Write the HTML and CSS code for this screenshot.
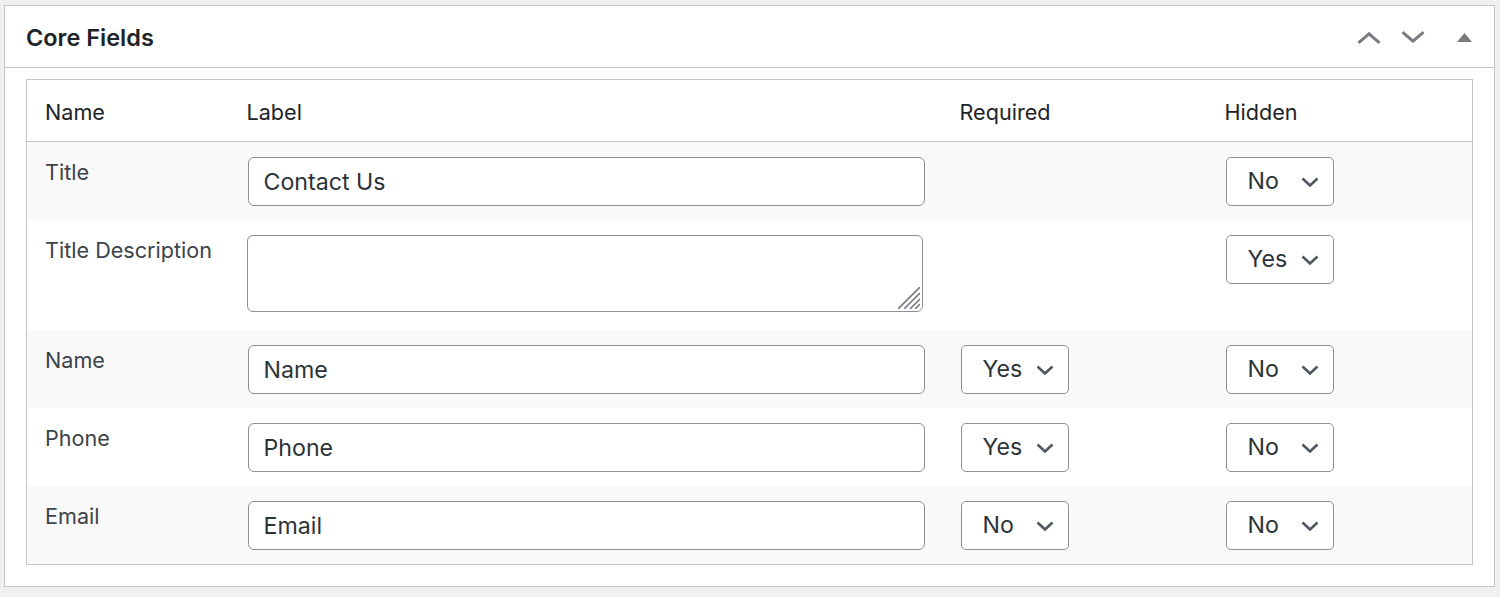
FILE: index.html
```html
<!DOCTYPE html>
<html lang="en">
<head>
<meta charset="utf-8">
<title>Core Fields</title>
<link rel="stylesheet" href="styles.css">
</head>
<body>
<div class="postbox">
  <div class="postbox-header">
    <h2 class="hndle">Core Fields</h2>
    <div class="handle-actions">
      <button class="handle-btn btn-up" type="button" aria-label="Move up">
        <svg width="24" height="12" viewBox="0 0 24 12"><path d="M1.5 10.8 L12 1.8 L22.5 10.8" fill="none" stroke="#787c82" stroke-width="3"/></svg>
      </button>
      <button class="handle-btn btn-down" type="button" aria-label="Move down">
        <svg width="24" height="12" viewBox="0 0 24 12"><path d="M1.5 1.2 L12 10.2 L22.5 1.2" fill="none" stroke="#787c82" stroke-width="3"/></svg>
      </button>
      <button class="handle-btn btn-toggle" type="button" aria-label="Toggle panel">
        <svg width="15" height="9" viewBox="0 0 15 9"><polygon points="7.5,0 15,9 0,9" fill="#787c82"/></svg>
      </button>
    </div>
  </div>
  <div class="inside">
    <table class="fields">
      <colgroup>
        <col class="col-name">
        <col class="col-label">
        <col class="col-req">
        <col class="col-hid">
      </colgroup>
      <thead>
        <tr><th>Name</th><th>Label</th><th>Required</th><th>Hidden</th></tr>
      </thead>
      <tbody>
        <tr class="alt">
          <td class="fname">Title</td>
          <td><input class="text" type="text" value="Contact Us"></td>
          <td></td>
          <td><div class="select">No<svg width="18" height="10" viewBox="0 0 18 10"><path d="M1.5 1.5 L9 8.5 L16.5 1.5" fill="none" stroke="#50575e" stroke-width="2.6"/></svg></div></td>
        </tr>
        <tr class="tall">
          <td class="fname">Title Description</td>
          <td><div class="area"><textarea class="textarea"></textarea><svg class="grip" width="22" height="22" viewBox="0 0 22 22"><path d="M0 22 L22 0 M6 22 L22 6 M12 22 L22 12 M17 22 L22 17" stroke="#787c82" stroke-width="1.6"/></svg></div></td>
          <td></td>
          <td><div class="select">Yes<svg width="18" height="10" viewBox="0 0 18 10"><path d="M1.5 1.5 L9 8.5 L16.5 1.5" fill="none" stroke="#50575e" stroke-width="2.6"/></svg></div></td>
        </tr>
        <tr class="alt">
          <td class="fname">Name</td>
          <td><input class="text" type="text" value="Name"></td>
          <td><div class="select">Yes<svg width="18" height="10" viewBox="0 0 18 10"><path d="M1.5 1.5 L9 8.5 L16.5 1.5" fill="none" stroke="#50575e" stroke-width="2.6"/></svg></div></td>
          <td><div class="select">No<svg width="18" height="10" viewBox="0 0 18 10"><path d="M1.5 1.5 L9 8.5 L16.5 1.5" fill="none" stroke="#50575e" stroke-width="2.6"/></svg></div></td>
        </tr>
        <tr>
          <td class="fname">Phone</td>
          <td><input class="text" type="text" value="Phone"></td>
          <td><div class="select">Yes<svg width="18" height="10" viewBox="0 0 18 10"><path d="M1.5 1.5 L9 8.5 L16.5 1.5" fill="none" stroke="#50575e" stroke-width="2.6"/></svg></div></td>
          <td><div class="select">No<svg width="18" height="10" viewBox="0 0 18 10"><path d="M1.5 1.5 L9 8.5 L16.5 1.5" fill="none" stroke="#50575e" stroke-width="2.6"/></svg></div></td>
        </tr>
        <tr class="alt">
          <td class="fname">Email</td>
          <td><input class="text" type="text" value="Email"></td>
          <td><div class="select">No<svg width="18" height="10" viewBox="0 0 18 10"><path d="M1.5 1.5 L9 8.5 L16.5 1.5" fill="none" stroke="#50575e" stroke-width="2.6"/></svg></div></td>
          <td><div class="select">No<svg width="18" height="10" viewBox="0 0 18 10"><path d="M1.5 1.5 L9 8.5 L16.5 1.5" fill="none" stroke="#50575e" stroke-width="2.6"/></svg></div></td>
        </tr>
      </tbody>
    </table>
  </div>
</div>
</body>
</html>
```
FILE: styles.css
```css
html, body {
  margin: 0;
  padding: 0;
  background: #f0f0f1;
}

body {
  font-family: Inter, "Noto Sans", "Liberation Sans", sans-serif;
  color: #1d2327;
}

.postbox {
  margin: 5px 5px 0 4px;
  background: #fff;
  border: 1px solid #c3c4c7;
}

.postbox-header {
  display: flex;
  align-items: center;
  justify-content: space-between;
  height: 61px;
  border-bottom: 1px solid #c3c4c7;
}

.hndle {
  margin: 0;
  padding: 2px 0 0 21px;
  font-size: 23.5px;
  font-weight: 600;
  line-height: 59px;
  color: #1d2327;
}

.handle-actions {
  display: flex;
  align-items: center;
  height: 100%;
}

.handle-btn {
  display: flex;
  align-items: center;
  justify-content: center;
  height: 100%;
  padding: 0;
  margin: 0;
  border: 0;
  background: transparent;
}

.btn-up {
  width: 44px;
  padding-top: 3px;
}

.btn-down {
  width: 43px;
}

.btn-toggle {
  width: 60px;
  padding-top: 1px;
}

.inside {
  padding: 11px 21px 21px 21px;
}

.fields {
  width: 100%;
  border-collapse: collapse;
  table-layout: fixed;
  border: 1px solid #c3c4c7;
}

.col-name { width: 203px; }
.col-label { width: 713px; }
.col-req { width: 265px; }

.fields th {
  text-align: left;
  font-weight: 400;
  font-size: 21.6px;
  line-height: 31px;
  padding: 17px 18px 13px 17px;
  color: #1d2327;
  border-bottom: 1px solid #c3c4c7;
}

.fields th:first-child {
  padding-left: 18px;
}

.fields td {
  vertical-align: top;
  padding: 15px 18px 14px;
  font-size: 21.6px;
  line-height: 31px;
}

.fields tr.alt td {
  background: #f9f9f9;
}

.fname {
  color: #3c434a;
  white-space: nowrap;
}

.fields td.fname {
  padding-top: 15px;
  padding-right: 0;
}

.text {
  display: block;
  box-sizing: border-box;
  width: 100%;
  height: 49px;
  margin: 0;
  padding: 0 15px;
  border: 1px solid #8c8f94;
  border-radius: 6px;
  background: #fff;
  font-family: Inter, "Noto Sans", "Liberation Sans", sans-serif;
  font-size: 23.2px;
  color: #2c3338;
  outline: none;
}

.area {
  position: relative;
  height: 77px;
  margin-bottom: 4px;
  margin-left: -1px;
  margin-right: 2px;
}

.textarea {
  display: block;
  box-sizing: border-box;
  width: 100%;
  height: 100%;
  margin: 0;
  padding: 8px 15px;
  border: 1px solid #8c8f94;
  border-radius: 6px;
  background: #fff;
  resize: none;
  font-family: Inter, "Noto Sans", "Liberation Sans", sans-serif;
  font-size: 23.2px;
  outline: none;
}

.grip {
  position: absolute;
  right: 3px;
  bottom: 3px;
}

.select {
  display: flex;
  align-items: center;
  justify-content: space-between;
  box-sizing: border-box;
  width: 108px;
  height: 49px;
  padding: 0 14px 0 21px;
  border: 1px solid #8c8f94;
  border-radius: 5px;
  background: #fff;
  font-size: 23.2px;
  color: #2c3338;
}

.select svg {
  flex: none;
  margin-top: 1px;
}
```
